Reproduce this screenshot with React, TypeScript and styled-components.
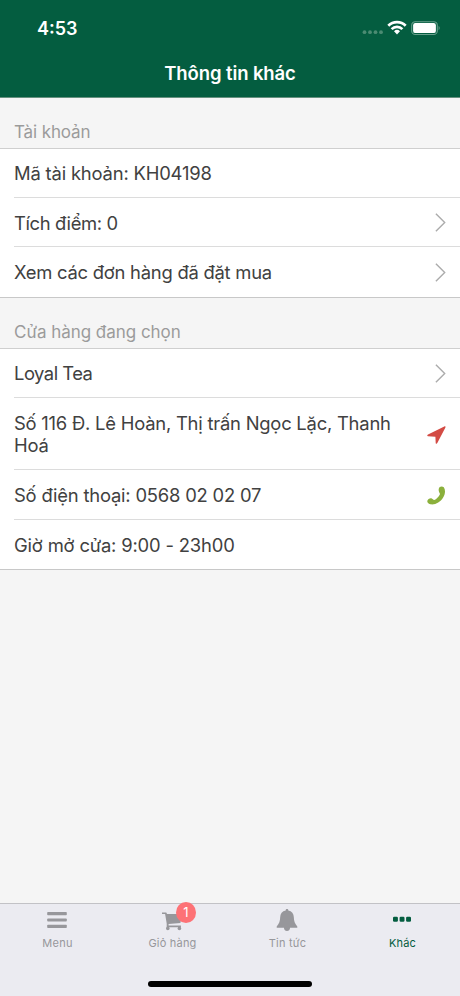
import React from "react";
import styled, { createGlobalStyle } from "styled-components";

const GlobalStyle = createGlobalStyle`
  * { box-sizing: border-box; }
  body { margin: 0; background: #f5f5f5; }
`;

const Screen = styled.div`
  width: 460px;
  height: 996px;
  display: flex;
  flex-direction: column;
  background: #f5f5f5;
  font-family: Inter, "Liberation Sans", sans-serif;
  color: #414141;
  overflow: hidden;
`;

const Header = styled.header`
  height: 98px;
  flex: none;
  background: #045d40;
  border-bottom: 1px solid #66917f;
  color: #fff;
`;

const StatusBar = styled.div`
  height: 55px;
  padding: 1px 19px 0 37px;
  display: flex;
  align-items: center;
  justify-content: space-between;
`;

const Clock = styled.span`
  font-size: 18px;
  font-weight: 600;
  line-height: 22px;
  padding-top: 1px;
`;

const StatusIcons = styled.div`
  display: flex;
  align-items: center;
  svg { display: block; }
`;

const Title = styled.h1`
  margin: 0;
  padding-top: 6px;
  font-size: 18.5px;
  font-weight: 600;
  line-height: 24px;
  letter-spacing: -0.1px;
  text-align: center;
`;

const SectionLabel = styled.h2<{ $spacing: number }>`
  margin: 0;
  height: 50px;
  padding: 23px 14px 0;
  font-size: 17px;
  font-weight: 400;
  line-height: 22px;
  letter-spacing: ${(p) => p.$spacing}px;
  color: #9b9b9b;
`;

const List = styled.section`
  background: #fff;
  border-top: 1px solid #cfcfcf;
  border-bottom: 1px solid #c8c8c8;
  padding-left: 14px;
`;

const Row = styled.div<{ $h: number; $last?: boolean }>`
  height: ${(p) => p.$h}px;
  display: flex;
  align-items: center;
  justify-content: space-between;
  padding: 1px 14px 0 0;
  border-bottom: ${(p) => (p.$last ? 0 : 1)}px solid #dcdcdc;
  svg { display: block; flex: none; }
`;

const RowText = styled.span<{ $spacing: number; $drop?: number }>`
  font-size: 18.4px;
  line-height: 22.5px;
  letter-spacing: ${(p) => p.$spacing}px;
  padding-top: ${(p) => p.$drop ?? 0}px;
  white-space: pre-line;
`;

const TabBar = styled.nav`
  height: 93px;
  margin-top: auto;
  flex: none;
  background: #ebebf1;
  border-top: 1px solid #c2c2c6;
  display: flex;
  flex-direction: column;
  align-items: center;
`;

const Tabs = styled.div`
  width: 100%;
  height: 77px;
  display: grid;
  grid-template-columns: repeat(4, 1fr);
`;

const Tab = styled.div<{ $active?: boolean }>`
  display: flex;
  flex-direction: column;
  align-items: center;
  color: ${(p) => (p.$active ? "#045d40" : "#97979b")};
`;

const TabIcon = styled.div`
  position: relative;
  height: 32px;
  padding: 2px 1px 0 0;
  svg { display: block; }
`;

const TabLabel = styled.span<{ $spacing: number }>`
  font-size: 11px;
  line-height: 15px;
  letter-spacing: ${(p) => p.$spacing}px;
`;

const Badge = styled.span`
  position: absolute;
  left: 14px;
  top: -2px;
  width: 20px;
  height: 21px;
  border-radius: 50%;
  background: #fd7276;
  color: #fff;
  font-size: 13px;
  line-height: 21px;
  text-align: center;
`;

const HomeIndicator = styled.div`
  width: 164px;
  height: 6px;
  border-radius: 3px;
  background: #000;
`;

const Chevron = () => (
  <svg width="11" height="20" viewBox="0 .5 11 20" fill="none" stroke="#acacac" strokeWidth="1.4">
    <path d="M.9 1.2 9.7 10 .9 18.8" />
  </svg>
);

const Arrow = () => (
  <svg width="19" height="22" viewBox="0 -3 19 22" fill="#d34b44">
    <path d="M17.3 .4C18.4 0 18.8.8 18.3 1.7L10.3 17.1C9.8 18.2 8.7 18 8.7 16.9L8.4 10.8 1 10.2C0 10 0 8.8 1 8.4Z" />
  </svg>
);

const Phone = () => (
  <svg width="19" height="19" viewBox="0 0 19 19" fill="#8bb03c">
    <path d="M12.7 1C13.9.2 15.6.2 16.8 1.2 18.7 4 18.3 8.2 16 11.8 13.2 16.3 8.2 19.2 3.2 18.3 1.3 17.8.1 16.6.3 15 .6 13.2 2.6 12 4.3 12.2 5.7 12.5 6.2 14.2 7.3 14 9.4 13.3 11.7 10.6 12.8 8.5 13.3 7.4 12.1 6.4 11.8 4.9 11.4 3.4 11.8 1.9 12.7 1Z" />
  </svg>
);

const MenuIcon = () => (
  <svg width="20" height="26" viewBox="0 0 20 26" fill="currentColor">
    <rect x=".2" y="6" width="19.6" height="3.2" rx=".8" />
    <rect x=".2" y="12.4" width="19.6" height="3.2" rx=".8" />
    <rect x=".2" y="18.8" width="19.6" height="3.2" rx=".8" />
  </svg>
);

const CartIcon = () => (
  <svg width="20" height="26" viewBox="0 0 20 26" fill="currentColor">
    <path d="M0 6.5H4.3L5 7.9H20L18.4 17 6.6 18.1V19.4H18.9V21.3H4.7V17.4L3.1 8H0Z" />
    <circle cx="5.8" cy="22.4" r="1.8" />
    <circle cx="17.4" cy="22.4" r="1.8" />
  </svg>
);

const BellIcon = () => (
  <svg width="22" height="26" viewBox="0 0 22 26" fill="currentColor">
    <path d="M11 3C11.8 3 12.3 3.5 12.3 4.4 15.9 5.1 17.7 7.5 17.8 11 17.9 15.3 18.8 17.4 21.3 20.4V21.7H14.1C13.8 24.1 12.7 25 11 25S8.2 24.1 7.9 21.7H.7V20.4C3.2 17.4 4.1 15.3 4.2 11 4.3 7.5 6.1 5.1 9.7 4.4 9.7 3.5 10.2 3 11 3Z" />
  </svg>
);

const MoreIcon = () => (
  <svg width="18" height="26" viewBox="0 0 18 26" fill="currentColor">
    <rect x="0" y="10.8" width="4.9" height="5" rx="1.2" />
    <rect x="6.6" y="10.8" width="4.9" height="5" rx="1.2" />
    <rect x="13.1" y="10.8" width="4.9" height="5" rx="1.2" />
  </svg>
);

const DotsSignal = () => (
  <svg width="26" height="20" viewBox="0 0 26 20" fill="#4b8b72">
    <circle cx="3.5" cy="14.2" r="1.9" />
    <circle cx="9" cy="14.2" r="1.9" />
    <circle cx="14.5" cy="14.2" r="1.9" />
    <circle cx="20" cy="14.2" r="1.9" />
  </svg>
);

const Wifi = () => (
  <svg width="20" height="20" viewBox="0 0 20 20" fill="none" stroke="#fff" strokeWidth="2.7">
    <path d="M1.3 7.8A12.3 12.3 0 0 1 18.7 7.8" />
    <path d="M4.6 11.1A7.6 7.6 0 0 1 15.4 11.1" />
    <path d="M7 13.2A4.3 4.3 0 0 1 13 13.2L10 16.4Z" fill="#fff" stroke="none" />
  </svg>
);

const Battery = () => (
  <svg width="34" height="20" viewBox="0 0 34 20">
    <rect x="4.7" y="3.7" width="25.6" height="12.8" rx="3.6" fill="none" stroke="#68a08c" strokeWidth="1.1" />
    <rect x="6.1" y="5.1" width="22.8" height="10" rx="2.2" fill="#fff" />
    <path d="M31.6 8C33 8.6 33 11.6 31.6 12.2Z" fill="#68a08c" />
  </svg>
);

export default function App() {
  return (
    <Screen>
      <GlobalStyle />
      <Header>
        <StatusBar>
          <Clock>4:53</Clock>
          <StatusIcons>
            <DotsSignal />
            <Wifi />
            <Battery />
          </StatusIcons>
        </StatusBar>
        <Title>Thông tin khác</Title>
      </Header>

      <SectionLabel $spacing={-0.12}>Tài khoản</SectionLabel>
      <List>
        <Row $h={49}><RowText $spacing={-0.18}>Mã tài khoản: KH04198</RowText></Row>
        <Row $h={49}><RowText $spacing={-0.36} $drop={1}>Tích điểm: 0</RowText><Chevron /></Row>
        <Row $h={50} $last><RowText $spacing={-0.24}>Xem các đơn hàng đã đặt mua</RowText><Chevron /></Row>
      </List>

      <SectionLabel $spacing={-0.03}>Cửa hàng đang chọn</SectionLabel>
      <List>
        <Row $h={49}><RowText $spacing={-0.5}>Loyal Tea</RowText><Chevron /></Row>
        <Row $h={72}>
          <RowText $spacing={-0.22}>{"Số 116 Đ. Lê Hoàn, Thị trấn Ngọc Lặc, Thanh\nHoá"}</RowText>
          <Arrow />
        </Row>
        <Row $h={50}><RowText $spacing={-0.2}>Số điện thoại: 0568 02 02 07</RowText><Phone /></Row>
        <Row $h={49} $last><RowText $spacing={-0.17}>Giờ mở cửa: 9:00 - 23h00</RowText></Row>
      </List>

      <TabBar>
        <Tabs>
          <Tab><TabIcon><MenuIcon /></TabIcon><TabLabel $spacing={0.3}>Menu</TabLabel></Tab>
          <Tab><TabIcon><CartIcon /><Badge>1</Badge></TabIcon><TabLabel $spacing={0.2}>Giỏ hàng</TabLabel></Tab>
          <Tab><TabIcon><BellIcon /></TabIcon><TabLabel $spacing={0.2}>Tin tức</TabLabel></Tab>
          <Tab $active><TabIcon><MoreIcon /></TabIcon><TabLabel $spacing={0.2}>Khác</TabLabel></Tab>
        </Tabs>
        <HomeIndicator />
      </TabBar>
    </Screen>
  );
}
